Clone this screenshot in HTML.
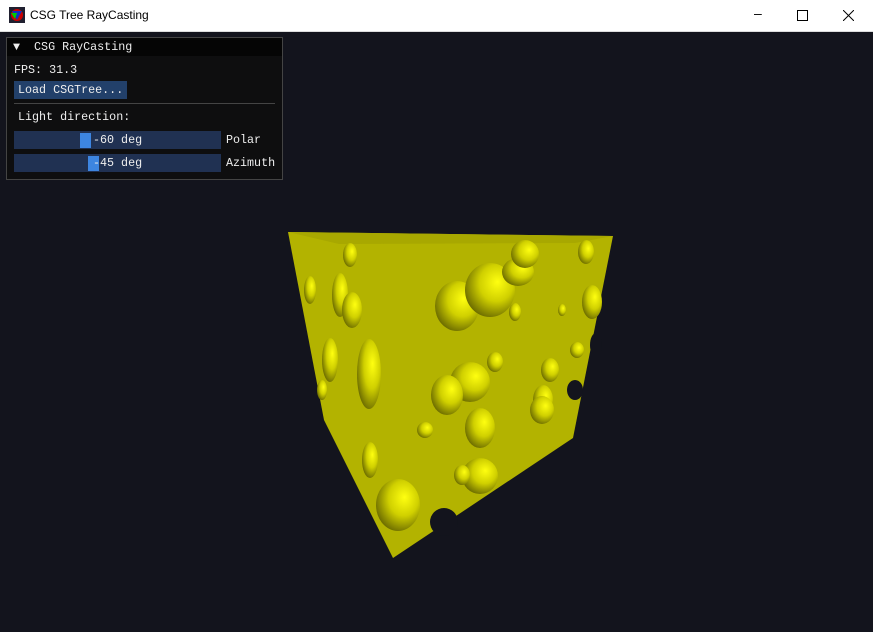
<!DOCTYPE html>
<html><head><meta charset="utf-8"><style>
body{margin:0;width:873px;height:632px;overflow:hidden;background:#13141d;font-family:"Liberation Mono",monospace;}
#tb{position:absolute;left:0;top:0;width:873px;height:31px;background:#fff;border-bottom:1px solid #ddd;}
#tb .t{position:absolute;left:30px;top:8px;font:12px "Liberation Sans",sans-serif;color:#000;}
.m{position:absolute;color:#000;font:14px "Liberation Sans",sans-serif;}
#p{position:absolute;left:6px;top:37px;width:275px;height:141px;background:#0e0e0f;border:1px solid #444;}
.tx{position:absolute;color:#eee;font-size:11.7px;line-height:13px;white-space:pre;}
.sl{position:absolute;left:7px;width:207px;height:18px;background:#203152;}
.g{position:absolute;top:2px;width:11px;height:15px;background:#3d85e0;}
</style></head><body>
<div id="tb">
<svg style="position:absolute;left:9px;top:7px" width="16" height="16"><rect width="16" height="16" fill="#202030"/><circle cx="8" cy="8" r="6" fill="#c00"/><path d="M3 4h10l-5 9z" fill="#1030c0"/><path d="M2 6l4 6 2-6z" fill="#0c0"/></svg>
<div class="t">CSG Tree RayCasting</div>
<div class="m" style="left:754px;top:5px">–</div>
<svg style="position:absolute;left:797px;top:10px" width="11" height="11"><rect x="0.5" y="0.5" width="10" height="10" fill="none" stroke="#000"/></svg>
<svg style="position:absolute;left:843px;top:10px" width="11" height="11"><path d="M0 0L11 11M11 0L0 11" stroke="#000"/></svg>
</div>
<div id="p">
<div style="position:absolute;left:0;top:0;width:275px;height:18px;background:#050505"></div>
<div class="tx" style="left:6px;top:3px">▼  CSG RayCasting</div>
<div class="tx" style="left:7px;top:26px">FPS: 31.3</div>
<div style="position:absolute;left:7px;top:43px;width:113px;height:18px;background:#22406a"></div>
<div class="tx" style="left:11px;top:46px">Load CSGTree...</div>
<div style="position:absolute;left:7px;top:65px;width:261px;height:1px;background:#444"></div>
<div class="tx" style="left:11px;top:73px">Light direction:</div>
<div class="sl" style="top:93px"><div class="g" style="left:66px"></div></div>
<div class="tx" style="left:86px;top:96px">-60 deg</div>
<div class="tx" style="left:219px;top:96px">Polar</div>
<div class="sl" style="top:116px"><div class="g" style="left:74px"></div></div>
<div class="tx" style="left:86px;top:119px">-45 deg</div>
<div class="tx" style="left:219px;top:119px">Azimuth</div>
</div>
<svg style="position:absolute;left:0;top:0" width="873" height="632">
<defs>
<radialGradient id="h" cx="0.6" cy="0.4" r="0.75" fx="0.65" fy="0.35"><stop offset="0" stop-color="#ffff10"/><stop offset="0.45" stop-color="#d0d000"/><stop offset="0.85" stop-color="#707000"/><stop offset="1" stop-color="#404000"/></radialGradient>
</defs>
<polygon points="288,232 613,236 573,438 393,558 324,420" fill="#b3b300"/>
<polygon points="288,232 613,236 575,243 339,244" fill="#a8a800"/>
<g fill="url(#h)">
<ellipse cx="350" cy="255" rx="7" ry="12"/>
<ellipse cx="457" cy="306" rx="22" ry="25"/>
<ellipse cx="490" cy="290" rx="25" ry="27"/>
<ellipse cx="518" cy="272" rx="16" ry="14"/>
<ellipse cx="525" cy="254" rx="14" ry="14"/>
<ellipse cx="586" cy="252" rx="8" ry="12"/>
<ellipse cx="515" cy="312" rx="6" ry="9"/>
<ellipse cx="562" cy="310" rx="4" ry="6"/>
<ellipse cx="592" cy="302" rx="10" ry="17"/>
<ellipse cx="470" cy="382" rx="20" ry="20"/>
<ellipse cx="447" cy="395" rx="16" ry="20"/>
<ellipse cx="495" cy="362" rx="8" ry="10"/>
<ellipse cx="550" cy="370" rx="9" ry="12"/>
<ellipse cx="543" cy="400" rx="10" ry="15"/>
<ellipse cx="577" cy="350" rx="7" ry="8"/>
<ellipse cx="480" cy="428" rx="15" ry="20"/>
<ellipse cx="425" cy="430" rx="8" ry="8"/>
<ellipse cx="542" cy="410" rx="12" ry="14"/>
<ellipse cx="480" cy="476" rx="18" ry="18"/>
<ellipse cx="462" cy="475" rx="8" ry="10"/>
<ellipse cx="398" cy="505" rx="22" ry="26"/>
<ellipse cx="369" cy="374" rx="12" ry="35"/>
<ellipse cx="340" cy="295" rx="8" ry="22"/>
<ellipse cx="330" cy="360" rx="8" ry="22"/>
<ellipse cx="310" cy="290" rx="6" ry="14"/>
<ellipse cx="352" cy="310" rx="10" ry="18"/>
<ellipse cx="370" cy="460" rx="8" ry="18"/>
<ellipse cx="322" cy="390" rx="5" ry="10"/>
</g>
<g fill="#13141d">
<circle cx="444" cy="522" r="14"/>
<ellipse cx="596" cy="345" rx="6" ry="12"/>
<ellipse cx="575" cy="390" rx="8" ry="10"/>
</g>
</svg>
</body></html>
